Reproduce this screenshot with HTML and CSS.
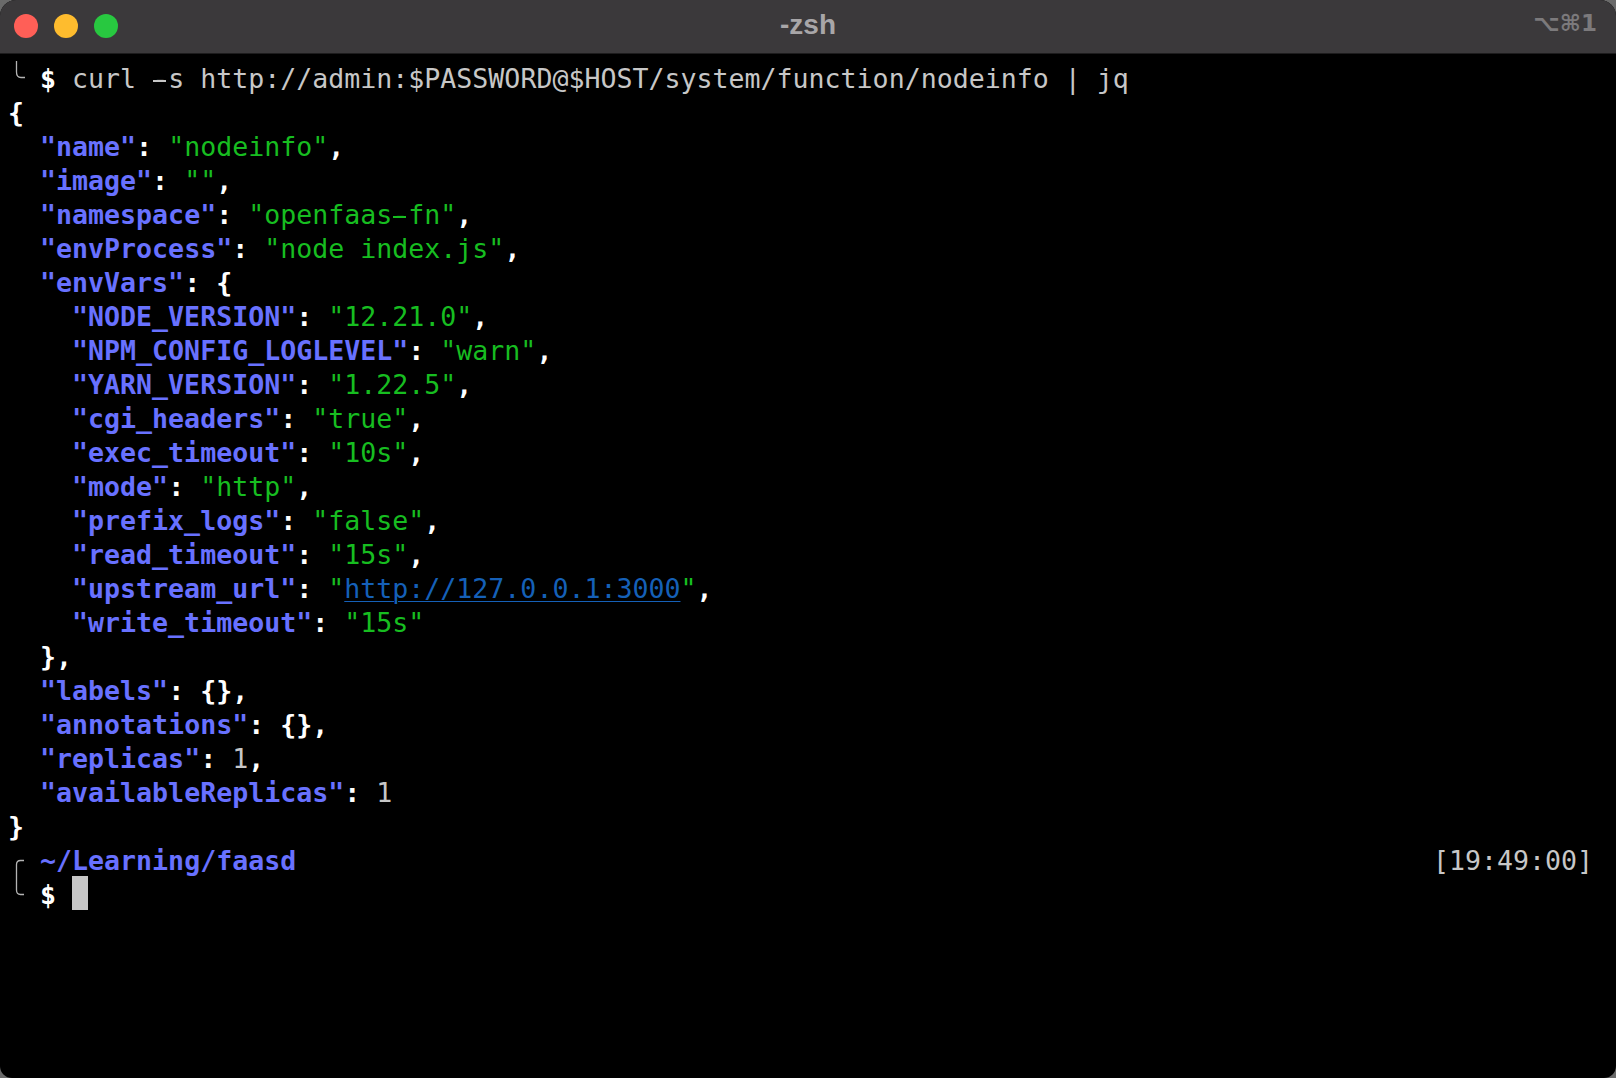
FILE: index.html
```html
<!DOCTYPE html>
<html lang="en">
<head>
<meta charset="utf-8">
<title>-zsh</title>
<link rel="stylesheet" href="styles.css">
</head>
<body>
<div class="window">
  <header class="titlebar">
    <div class="lights"><span class="light red"></span><span class="light yellow"></span><span class="light green"></span></div>
    <div class="title">-zsh</div>
    <div class="shortcut">⌥⌘1</div>
  </header>
  <main class="term">
    <svg class="corner-top" width="12" height="20" viewBox="0 0 12 20"><path d="M1.5 0V11Q1.5 16.5 6 16.5H10" fill="none" stroke="#b4b4b4" stroke-width="1.3"/></svg>
    <div class="line">  <b>$</b> curl <span class="dash">-</span>s http://admin:$PASSWORD@$HOST/system/function/nodeinfo | jq</div>
    <div class="line"><b>{</b></div>
    <div class="line">  <i>"name"</i><b>:</b> <s>"nodeinfo"</s><b>,</b></div>
    <div class="line">  <i>"image"</i><b>:</b> <s>""</s><b>,</b></div>
    <div class="line">  <i>"namespace"</i><b>:</b> <s>"openfaas<span class="dash">-</span>fn"</s><b>,</b></div>
    <div class="line">  <i>"envProcess"</i><b>:</b> <s>"node index.js"</s><b>,</b></div>
    <div class="line">  <i>"envVars"</i><b>:</b> <b>{</b></div>
    <div class="line">    <i>"NODE_VERSION"</i><b>:</b> <s>"12.21.0"</s><b>,</b></div>
    <div class="line">    <i>"NPM_CONFIG_LOGLEVEL"</i><b>:</b> <s>"warn"</s><b>,</b></div>
    <div class="line">    <i>"YARN_VERSION"</i><b>:</b> <s>"1.22.5"</s><b>,</b></div>
    <div class="line">    <i>"cgi_headers"</i><b>:</b> <s>"true"</s><b>,</b></div>
    <div class="line">    <i>"exec_timeout"</i><b>:</b> <s>"10s"</s><b>,</b></div>
    <div class="line">    <i>"mode"</i><b>:</b> <s>"http"</s><b>,</b></div>
    <div class="line">    <i>"prefix_logs"</i><b>:</b> <s>"false"</s><b>,</b></div>
    <div class="line">    <i>"read_timeout"</i><b>:</b> <s>"15s"</s><b>,</b></div>
    <div class="line">    <i>"upstream_url"</i><b>:</b> <s>"<a class="link">http://127.0.0.1:3000</a>"</s><b>,</b></div>
    <div class="line">    <i>"write_timeout"</i><b>:</b> <s>"15s"</s></div>
    <div class="line">  <b>}</b><b>,</b></div>
    <div class="line">  <i>"labels"</i><b>:</b> <b>{}</b><b>,</b></div>
    <div class="line">  <i>"annotations"</i><b>:</b> <b>{}</b><b>,</b></div>
    <div class="line">  <i>"replicas"</i><b>:</b> 1<b>,</b></div>
    <div class="line">  <i>"availableReplicas"</i><b>:</b> 1</div>
    <div class="line"><b>}</b></div>
    <div class="line split"><span>  <i>~/Learning/faasd</i></span><span>[19:49:00]</span></div>
    <div class="line">  <b>$</b> <span class="cursor"> </span></div>
    <svg class="corner-bracket" width="12" height="38" viewBox="0 0 12 38"><path d="M9 1.5H5.5Q1.5 1.5 1.5 5.5V31Q1.5 35.5 5.5 35.5H9" fill="none" stroke="#b4b4b4" stroke-width="1.3"/></svg>
  </main>
</div>
</body>
</html>
```
FILE: styles.css
```css
html, body {
  margin: 0;
  height: 100%;
  background: #6a6a6a;
  overflow: hidden;
}
.window {
  position: relative;
  height: 1078px;
  display: flex;
  flex-direction: column;
  background: #000;
  border-radius: 16px 16px 12px 12px;
  overflow: hidden;
}
.titlebar {
  height: 53px;
  flex: none;
  position: relative;
  display: flex;
  align-items: center;
  justify-content: center;
  background: #3b393b;
  border-bottom: 1px solid #1d1c1d;
}
.lights {
  position: absolute;
  left: 14px;
  top: 14px;
  display: flex;
  gap: 16px;
}
.light {
  display: block;
  width: 24px;
  height: 24px;
  border-radius: 50%;
}
.red { background: #ff5f57; }
.yellow { background: #febc2e; }
.green { background: #28c840; }
.title {
  margin-bottom: 4px;
  font: bold 28px "Liberation Sans", Arial, sans-serif;
  color: #a8a6a8;
}
.shortcut {
  position: absolute;
  right: 19px;
  top: 8px;
  font: bold 23px/30px "DejaVu Sans", sans-serif;
  color: #7c7a7c;
}
.term {
  position: relative;
  padding: 8px 23px 0 8px;
  font: 26.6px/34px "DejaVu Sans Mono", monospace;
  color: #c7c7c7;
}
.line {
  height: 34px;
  white-space: pre;
}
.split {
  display: flex;
  justify-content: space-between;
}
.dash {
  position: relative;
}
.dash::after {
  content: "";
  position: absolute;
  left: 1px;
  width: 13px;
  top: 17px;
  height: 2px;
  background: currentColor;
}
.term b { font-weight: bold; color: #fff; }
.term i { font-style: normal; font-weight: bold; color: #6871ff; }
.term s { text-decoration: none; color: #17bd20; }
.link { color: #1560b8; text-decoration: underline; text-underline-offset: 3px; text-decoration-thickness: 1px; }
.cursor {
  display: inline-block;
  width: 16px;
  height: 34px;
  margin-top: -2px;
  background: #c7c7c7;
  vertical-align: top;
}
.corner-top {
  position: absolute;
  left: 15px;
  top: 7px;
}
.corner-bracket {
  position: absolute;
  left: 15px;
  top: 805px;
}
```
